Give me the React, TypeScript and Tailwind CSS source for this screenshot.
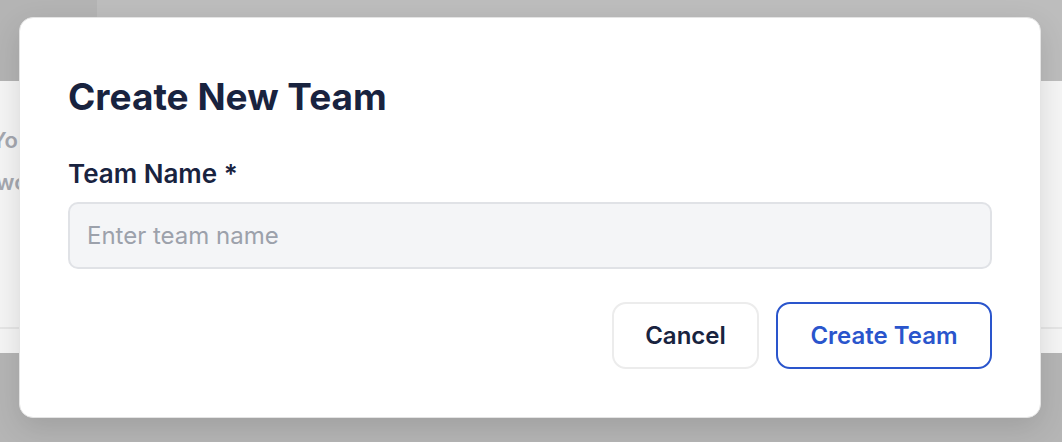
export default function App() {
  return (
    <div className="relative w-[1062px] h-[442px] overflow-hidden bg-[#b5b5b5] font-['Inter',sans-serif]">
      <div className="flex h-[81px]">
        <div className="w-[97px] bg-[#b4b4b4]" />
        <div className="flex-1 bg-[#bdbdbd]" />
      </div>
      <div className="h-[272px] bg-[#f5f5f5] flex flex-col">
        <div className="h-[248px] border-b-2 border-[#e6e6e6] pt-[38px] text-[22px] font-semibold text-[#a5a8b0] leading-[42px]">
          <div className="-ml-[9px]">You</div>
          <div className="-ml-[4px]">wo</div>
        </div>
      </div>

      <div className="absolute left-[19px] top-[17px] w-[1022px] h-[401px] bg-white rounded-[14px] border border-[#e4e4e4] shadow-[0_10px_30px_rgba(0,0,0,0.12)] px-[48px] pt-[57px]">
        <h2 className="text-[37px] leading-[44px] font-bold text-[#19233f]">Create New Team</h2>
        <label className="block mt-[39px] text-[26px] leading-[32px] font-semibold text-[#19233f]">
          Team Name *
        </label>
        <input
          className="mt-[12px] w-full h-[67px] rounded-[10px] border-2 border-[#e0e2e6] bg-[#f4f5f7] px-[17px] text-[24px] text-[#19233f] placeholder:text-[#9ca1ab] outline-none"
          placeholder="Enter team name"
        />
        <div className="mt-[33px] flex justify-end gap-[17px]">
          <button className="w-[147px] h-[67px] rounded-[14px] border-2 border-[#ececec] bg-white text-[24px] font-semibold text-[#19233f]">
            Cancel
          </button>
          <button className="w-[216px] h-[67px] rounded-[14px] border-2 border-[#2a55cc] bg-white text-[24px] font-semibold text-[#2a55cc]">
            Create Team
          </button>
        </div>
      </div>
    </div>
  );
}
